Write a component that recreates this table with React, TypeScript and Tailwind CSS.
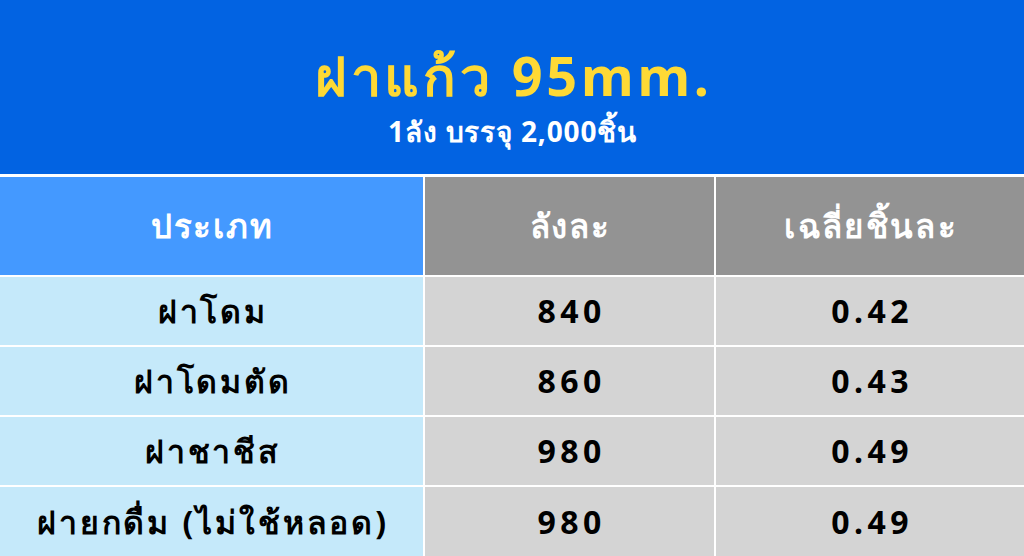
import React from "react";

const rows = [
  { name: "ฝาโดม", box: "840", each: "0.42" },
  { name: "ฝาโดมตัด", box: "860", each: "0.43" },
  { name: "ฝาชาชีส", box: "980", each: "0.49" },
  { name: "ฝายกดื่ม (ไม่ใช้หลอด)", box: "980", each: "0.49" },
];

export default function App() {
  return (
    <div
      className="w-[1024px] h-[556px] bg-white overflow-hidden flex flex-col"
      style={{ fontFamily: '"Noto Sans", "Open Sans", sans-serif' }}
    >
      <div className="h-[176px] bg-[#0263E2] flex flex-col items-center justify-center pt-[20px]">
        <div className="text-[#FED935] text-[54px] font-bold leading-[56px] tracking-[0.07em] pl-[0.07em]">ฝาแก้ว 95mm.</div>
        <div className="text-white text-[28px] font-bold leading-[32px] mt-[12px] tracking-[0.03em] pl-[0.03em]">1ลัง บรรจุ 2,000ชิ้น</div>
      </div>
      <div className="mt-[3px] grid grid-cols-[423px_289px_1fr] gap-x-[2px] gap-y-[2px] grid-rows-[98px_68px_68px_68px_69px]">
        <div className="bg-[#4499FF] flex items-center justify-center text-white text-[33px] font-bold tracking-[0.06em] pl-[0.06em]">ประเภท</div>
        <div className="bg-[#939393] flex items-center justify-center text-white text-[33px] font-bold tracking-[0.06em] pl-[0.06em]">ลังละ</div>
        <div className="bg-[#939393] flex items-center justify-center text-white text-[33px] font-bold tracking-[0.07em] pl-[0.07em]">เฉลี่ยชิ้นละ</div>
        {rows.map((r, i) => (
          <React.Fragment key={i}>
            <div className="bg-[#C5E9FA] flex items-center justify-center text-black text-[32px] font-bold tracking-[0.09em] pl-[0.09em]">{r.name}</div>
            <div className="bg-[#D4D4D4] flex items-center justify-center text-black text-[32px] font-bold tracking-[0.14em] pl-[0.14em]">{r.box}</div>
            <div className="bg-[#D4D4D4] flex items-center justify-center text-black text-[32px] font-bold tracking-[0.14em] pl-[0.14em]">{r.each}</div>
          </React.Fragment>
        ))}
      </div>
    </div>
  );
}
